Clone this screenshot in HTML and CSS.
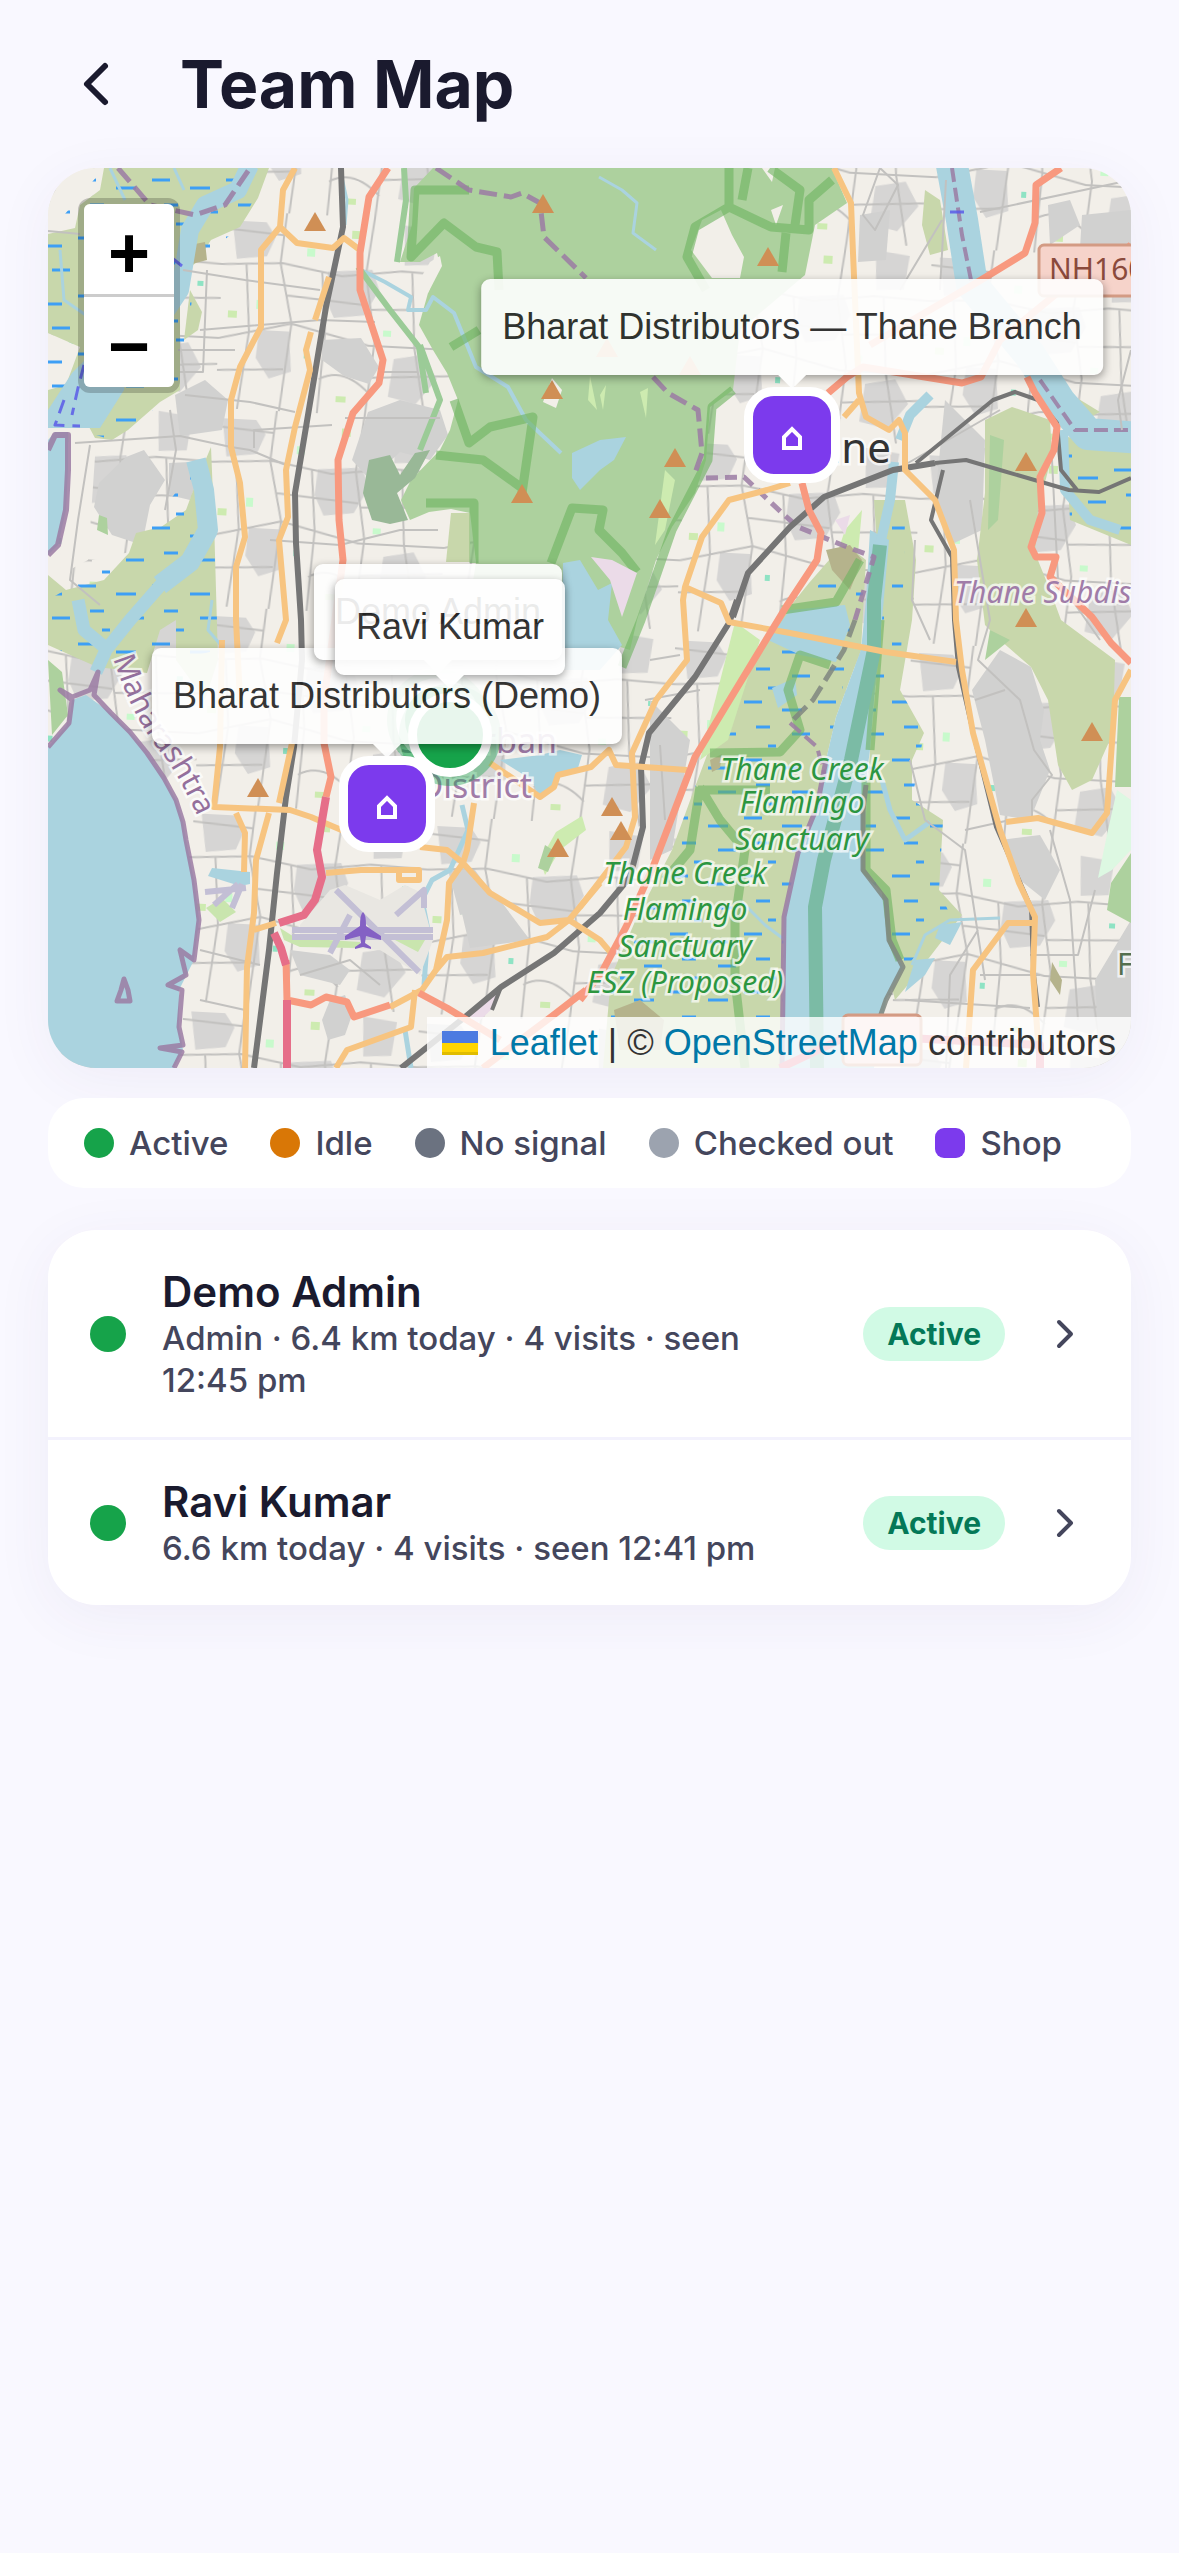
FILE: index.html
```html
<!DOCTYPE html>
<html lang="en">
  <head>
    <title>Team Map</title>
    <meta charset="UTF-8" />
    <meta name="viewport" content="width=device-width, initial-scale=1.0" />
    <link rel="stylesheet" href="styles.css">
  </head>
  <body>
    <header class="header">
      <button class="back" type="button" aria-label="Back">
        <svg class="back-icon" viewBox="0 0 24 24"><path d="M15 18L9 12L15 6" /></svg>
      </button>
      <h1>Team Map</h1>
    </header>

    <main>
      <section class="map" aria-label="Map">
        <svg class="tiles" viewBox="48 168 1083 900" preserveAspectRatio="xMidYMid slice">
          <defs>
            <pattern id="streets" width="236" height="198" patternUnits="userSpaceOnUse" patternTransform="rotate(3)">
              <path fill="#d6d5d4" d="M8 10h34l10 14-8 20-30 4zM106 56l44-4 8 20-14 26-30 4-10-20zM40 118h30l4 40-22 8-14-20zM180 6l34 4-4 34-28 2zM176 140l30-6 14 24-20 26-28-6z" />
              <path class="street" d="M0 54L60 50L120 60L180 52L236 54M62 0L58 50L72 110L64 198M0 128L72 110L150 128L236 128M150 0L144 56L156 124L150 198M24 52L30 120L22 198M100 56L106 118M190 52L196 128M0 18L60 22M66 82L148 88M150 92L236 88M106 118L102 198M152 160L236 154M0 160L66 156M102 164Q126 150 153 176M196 128L210 198" />
              <path fill="#c8facc" d="M84 34h8v8h-8zM164 112h8v6h-8zM36 88h7v9h-7z" />
              <path fill="#cdebb0" d="M128 14h9v8h-9zM8 100h9v7h-9zM120 180h10v6h-10z" />
              <path fill="#8fe3c4" d="M212 72h6v5h-6zM86 138h5v6h-5z" />
            </pattern>
            <pattern id="marsh" width="74" height="58" patternUnits="userSpaceOnUse">
              <path stroke="#3d9ff5" stroke-width="3" d="M4 6h18M42 14h20M16 31h14M52 38h18M28 50h8" />
            </pattern>
            <path id="peak" d="M0 -10L11 9H-11z" />
            <path id="coast-label" d="M113 658Q134 722 164 756Q186 786 212 850" />
          </defs>

          <rect x="48" y="168" width="1083" height="900" fill="#f2efe9" />
          <rect x="48" y="168" width="1083" height="900" fill="url(#streets)" />

          <!-- industrial blocks -->
          <g fill="#d1d1d0">
            <path d="M322 340L361 338L379 367L369 384L344 376L322 360z" />
            <path d="M126 457L144 450L165 480L150 505L142 545L112 535L94 507L99 483z" />
            <path d="M169 463L190 462L197 480L190 500L169 495z" />
            <path d="M368 412L400 400L440 410L448 435L430 460L400 452L370 480L352 460z" />
            <path d="M175 395L205 380L228 400L222 430L180 436z" />
            <path d="M1048 205L1070 200L1080 225L1050 245zM1082 215L1131 210V248H1080z" />
            <path d="M1000 650L1031 667L1044 710L1040 740L1050 770L1030 820L1000 815L985 740L972 690z" />
            <path d="M460 905L500 900L530 940L470 948zM448 870L475 870L500 905L460 915z" />
            <path d="M1095 980L1131 920V1068H1100z" />
            <path d="M945 400L985 440L982 530L950 545L935 500z" />
            <path d="M860 215L890 210L886 260L858 262z" />
            <path d="M330 1000L345 995L352 1015L345 1035L328 1040L322 1020z" />
            <path d="M650 700L690 740L672 850L650 860zM290 950L330 955L350 970L340 985L300 975z" />
            <path d="M1000 840L1040 835L1060 870L1045 900L1020 880z" />
          </g>

          <!-- bare land along the lower left shore -->
          <path fill="#f2efe9" d="M48 168H104L100 190L80 205L75 228L48 234zM48 333L80 347L66 385L48 390zM65 445L96 442L88 560L60 575zM92 560L130 552L105 580L90 575z" />

          <!-- marshes -->
          <g fill="#c8d7ab">
            <path d="M104 168H269L258 198L240 227L211 240L197 262L180 275V390L160 402L128 430L112 440L95 438L88 425L60 428L48 420V390L66 385L80 347L48 333V234L75 228L80 205L100 190z" />
            <path d="M190 290L202 312L198 330L184 340z" />
            <path d="M211 447L214 520L218 660L205 700L176 660V620L160 630L147 673L97 667L48 645V575L66 590L104 580L129 553L136 533L161 527L186 510L197 480z" />
            <path d="M844 543L809 583L763 640L710 747L695 787L672 850L637 917L611 977L603 1068H782L784 917L798 853L817 807L826 760L836 717L861 650L866 560z" />
            <path d="M874 500L905 500L916 560L912 620L900 690L924 733L912 760V800L943 820L939 890L962 915L912 980L895 1000L863 870L870 750L882 620z" />
            <path d="M1064 390L1100 412L1075 425zM1065 437L1131 440V545L1070 520z" />
            <path d="M925 190L940 200L948 250L930 255L922 225z" />
          </g>
          <g fill="#c8d7ab">
            <path d="M985 420L1012 407L1050 420L1052 455L1038 510L1035 553L1050 590L1061 620L1115 660L1113 733L1092 780L1072 790L1058 765L1048 700L1031 667L1000 640L985 625L977 560L985 493z" />
            <path d="M451 513H470V562H446z" />
          </g>
          <g fill="url(#marsh)">
            <path d="M48 234L104 168H269L240 227L197 262L180 390L112 440L48 420z" />
            <path d="M211 447L218 650L176 660L97 667L48 645V600L129 553z" />
            <path d="M844 560L763 640L695 787L672 850L611 990V1017H782L784 917L836 717L866 580z" />
            <path d="M874 520L905 520L900 690L924 733L912 800L943 820L939 890L950 915L895 980L863 870L870 750z" />
            <path d="M1064 400L1120 440H1131V545L1070 520z" />
          </g>

          <!-- national park -->
          <path fill="#add19e" d="M433 168L414 188L412 225L400 262L420 262L437 253L440 265L428 293L419 325L433 350L447 373L458 400L450 430L440 450L411 480L401 500L410 520L429 512L451 509L470 513L476 562L470 600L630 650L637 620L656 560L672 527L695 493L706 460L710 407L733 390L740 330L805 275L815 225L847 203L832 168z" />
          <path fill="#99b897" d="M369 460L390 455L400 475L415 453L430 450L415 478L397 493L408 520L390 524L372 520L363 493z" />
          <g fill="#f2efe9">
            <path d="M430 262L440 256L442 266L428 293L415 288z" />
            <path d="M721 210L732 235L744 257L740 278H712L691 250L702 220z" />
            <path d="M762 168L775 168L772 182zM771 210L783 205L776 225z" />
            <path d="M552 378L562 390L556 408L543 402z" />
          </g>
          <g fill="#cdebb0">
            <path d="M590 376L597 410L588 400zM665 470L675 480L665 530L655 545zM640 392L648 388L646 418zM600 395L606 385L603 410z" />
            <path d="M582 816L586 830L560 850L545 875L540 860L556 832z" />
            <path d="M735 622L760 640L728 740L700 760z" />
            <path d="M845 530L862 510L856 575L835 560z" />
          </g>
          <g fill="#add19e">
            <path d="M1119 697H1131V787H1115zM1131 853L1111 883L1107 910L1131 923zM990 435L1004 440L998 520L988 530zM985 660L990 630L1010 640z" />
            <path d="M545 845L556 852L548 872L538 868zM99 515L107 518L108 535L97 530zM48 660L62 672L68 715L52 735z" />
          </g>
          <path fill="#ddf8e2" d="M1117 790L1131 800V850L1112 870L1098 878L1108 830z" />
          <path fill="#b5b38c" d="M614 1010L640 1000L664 1020L660 1050H620zM190 245L205 242L207 260L192 264zM826 550L850 545L862 560L850 590L832 570zM1052 962L1062 980L1060 995L1050 980zM710 760L722 754L720 768L712 772z" />

          <!-- water -->
          <g fill="#aad3df">
            <path d="M48 747L69 723L72 700L86 695L111 713L130 732L147 753L164 778L176 800L183 822L186 840L194 880L199 920L194 960L179 990V1027L183 1050L174 1068H48z" />
            <path d="M48 440L55 432H68V470L66 510L58 545L48 555z" />
            <path d="M72 373L95 350L130 355L124 390L100 428H48V410z" />
            <path d="M572 453L600 440L626 437L614 460L600 470L580 490L572 478z" />
            <path d="M563 563L580 560L598 590L612 583L608 620L622 645L600 670H560z" />
            <path d="M870 530L889 540L882 620L878 650L870 750L866 780L863 813V870L886 900L889 940L903 967L886 1000L874 1068H782L784 917L798 853L817 807L826 760L836 717L861 650L866 600z" />
            <path d="M790 610L845 605L850 625L836 662L800 655L768 640z" />
            <path d="M772 688L795 678L797 695L778 708z" />
            <path d="M940 925L962 922L950 945L935 938zM915 960L935 958L925 975L905 992z" />
            <path d="M500 760L540 755L560 750L582 755L578 768L558 775L552 787L540 800L532 780z" />
            <path d="M208 876L240 886L250 884V872L212 868z" />
          </g>
          <g class="river">
            <path stroke-width="18" d="M250 165L238 190L205 205L190 230L180 290L150 335L110 355L82 385" />
            <path stroke-width="20" d="M196 460L204 490L208 530L190 562L160 585" />
            <path stroke-width="13" d="M165 580L130 620L106 650L96 672M108 650L84 630L78 600" />
            <path stroke-width="32" d="M951 160L962 220L972 285L1030 355L1060 402L1088 434L1140 438" />
            <path stroke-width="10" d="M894 462L890 500L880 545M930 395L910 415L900 440M1063 430L1065 490L1090 520L1120 530" />
            <path stroke-width="4" d="M361 270L385 282L411 297L408 310L426 310L433 297L454 313L476 367L508 387L526 420L561 453" />
            <path stroke-width="3" d="M599 177L622 190L637 203L633 233L656 250M110 168L125 200M174 168L184 190M340 168L347 200L345 225M60 250L64 300L90 318M212 600L208 630L225 650" />
            <path stroke-width="5" d="M462 805L468 830L450 870L432 880L422 900L428 930L424 985M411 1068L405 1030M882 780L890 810L905 840L930 822" />
            <path stroke-width="3" d="M912 965L925 935L950 920L1000 918M740 900L765 925L785 940" />
          </g>

          <!-- park and reserve outlines -->
          <g class="reserve">
            <path d="M469 190H415L411 257L444 223L476 247L497 252L499 290M479 330L451 347" />
            <path d="M454 400L469 443L490 427L533 417L522 493M436 455L483 460L522 488M426 503H474V563M551 563L572 508L603 510L599 530L622 553L637 572" />
            <path d="M729 168V207L695 227L687 257L706 290M729 207L771 227L809 230V200L832 180M786 233L782 272M770 168L800 190L795 225M748 168L742 200" />
            <path d="M733 390L712 407L708 460L672 530L641 620L622 667M782 610L836 602L860 560" />
            <path d="M710 753L780 752L800 730L788 690L800 655L830 665M698 790H770M700 787L720 820L745 850L735 920V980L745 1068M700 787L690 850L665 880" />
            <path d="M866 780V870L886 890L892 940L900 960M880 620L870 750" />
          </g>
          <path class="green-line" d="M404 168L406 200L397 262M358 267L390 310L419 347L426 393M420 345L440 400L420 450" />
          <path fill="none" stroke="#7bbba5" stroke-width="14" d="M880 545L874 600V650L851 760L824 860L815 907L817 1068" />
          <path fill="#ebdbe8" d="M591 557L612 560L637 573L622 617L610 580zM835 520L850 515L845 535zM470 1015L500 985L496 1005L475 1025z" />

          <!-- airport -->
          <path fill="#e9e7e2" d="M300 925L330 890L345 885L380 900L405 885L420 892L433 940L420 975L380 950L300 945z" />
          <path fill="#c9e5ae" d="M280 928L296 938L360 942V948L300 947L284 940zM395 940H425L418 952zM206 908L222 898L236 912L220 922z" />
          <path fill="none" stroke="#c3bfd5" stroke-width="6" d="M292 930H433M292 937H433M336 890L419 972M330 953L350 915M396 915L424 890V908M205 892L246 888M214 905L238 884M232 908L242 884" />

          <!-- shoreline and district borders -->
          <g class="border">
            <path stroke-width="5" d="M48 747L69 723L72 700L60 690L72 697L90 690L98 672L94 695L111 713L130 732L147 753L164 778L176 800L183 822L186 840L194 880L199 920L194 960L180 950L186 975L168 985L182 990L179 1027L183 1045L160 1048L182 1052L174 1068" />
            <path stroke-width="6" d="M48 450L55 435H68V470L66 510L58 545L48 555" />
            <path stroke-width="5" fill="#aad3df" d="M124 979L128 990L130 1001H117L121 990z" />
            <path stroke-width="5" d="M826 760L817 807L798 853L784 917L782 1068" />
            <path stroke-width="5" stroke="#7f867f" d="M866 785L863 810V870L886 900L889 940L903 967L886 1000L880 1017" />
            <path stroke-width="5" stroke-dasharray="18 7" d="M118 168L150 205L195 215L225 205L250 168" />
            <path stroke-width="5" stroke-dasharray="18 7" d="M436 168L469 190L511 197L522 193L540 203L544 237L586 278M653 377L668 393L698 410L702 453L695 473" />
            <path stroke-width="5" stroke-dasharray="12 7" d="M706 478L744 477L782 513L798 527L847 547L874 557L855 620" />
            <path stroke-width="5" stroke-dasharray="18 7" stroke="#7f867f" d="M855 620L844 650L813 700L790 723" />
            <path stroke-width="4" stroke-dasharray="14 6" d="M790 723L817 747L826 780M952 168L962 235L972 285M1040 380L1075 430L1131 430" />
            <path stroke-width="3" stroke="#5b5be8" stroke-dasharray="14 8" d="M84 365L78 388L72 415M64 400L55 425L80 426M172 258L182 266M950 212H968" />
          </g>

          <!-- minor roads -->
          <g class="street">
            <path d="M183 270L245 280L320 290M207 270L203 372L180 372M200 330L320 320L375 322M48 231L80 234M75 443L180 436L231 447L250 450L286 465M254 448L254 430L332 425M178 350H235M185 395L250 402L295 412M170 410L176 450L165 510" />
            <path d="M380 372H418M345 418H440M270 540L340 545L400 530H438M90 445L78 520L70 580L100 605" />
            <path d="M863 215L880 168L898 185L875 230zM900 290L942 220M980 212L1131 180M946 180L940 290M1131 350L1118 400L1122 430" />
            <path d="M908 463L1000 410M970 500L990 620L978 660L1020 700L1034 750L1052 775L1032 800V820M915 540L912 600L930 640M910 760L925 820L965 850L985 980M978 930L950 975L946 1068M965 830L1010 820" />
            <path d="M1050 830L1070 900L1078 1020M905 1000L1030 1008M980 975H1040M1030 955H1078L1095 890M1052 460L1058 580L1100 640M975 700L1005 690" />
            <path d="M650 660L680 655M645 700L700 690M660 745L665 820M200 950L260 965M200 1000L245 1010M300 975L350 960L380 985" />
          </g>

          <g class="rail">
            <path d="M341 168L343 227L326 307L306 427L295 493L296 543L301 620L302 660L294 747L286 797L277 873L269 950L254 1068" />
            <path d="M737 600L729 623L695 677L649 733L641 767L643 827L630 877L600 913L554 953L501 987L465 1017L401 1068M733 617L748 573L790 527L824 497L893 470L935 463" />
            <path class="thin" d="M935 463L966 460L1000 470L1069 490L1099 492L1131 478M916 463L993 400L1015 392L1038 400L1057 423L1061 470L1077 490M943 470L931 520L952 557L954 620L958 667L973 733L996 827L1031 907L1033 967L1038 1007M501 987L492 1010" />
          </g>

          <g class="secondary">
            <path d="M295 168L283 190L280 227L261 250V327L240 367L231 400V447L240 483L245 537L236 567V620L240 700M280 227L297 243L333 248L344 238L360 250" />
            <path d="M329 277L315 320M311 332L306 350L310 370L295 427L286 470L288 517L279 540L286 620L277 643M222 640L220 747L214 807L290 810L311 817L346 832M236 813L245 833L244 872M269 813L256 860L254 913L247 967L245 1068M254 930L276 923M292 743L279 803" />
            <path d="M326 873L361 870H419V880H399V870M420 847L447 850L463 863L490 893L540 923L569 920L600 940L611 953M474 803L467 850L463 863L449 883L447 920L436 970L422 990L390 1007M436 970L447 957L483 953L547 937L569 920L600 883M415 990L411 1027L347 1050L336 1068" />
            <path d="M490 763L540 797L554 787L558 775L591 767L609 750L616 765L687 770M790 483L767 490L729 500L702 537L685 587L683 600L687 660L656 700L632 753L635 817L626 847L580 907M685 587L721 603L729 622L790 633L886 652L956 662" />
            <path d="M834 168L851 203L853 253L859 393L866 417L889 430L899 420L905 433V470L935 500L954 550L956 620L962 670L973 733L1000 830L1019 883L1035 917L1033 973L1040 1068M859 400L844 417M1006 822L1038 818L1092 833L1107 813L1115 700L1131 670M1034 923H1008L973 970L966 1068" />
          </g>

          <g class="primary">
            <path d="M388 168L369 197L360 253V290L383 360L379 383L353 413L338 460L339 520L343 560L324 700V743L331 777L326 797M286 960L287 1000L311 1005L326 997L347 1002L354 1017L390 1005M419 993L447 1008L500 1040M586 990L551 1017L483 1068" />
            <path d="M802 483L809 510L821 533L817 560L786 607L695 757L653 867L626 927L603 970L580 1000M828 393L847 377L863 367L962 383L981 377L1000 340L1061 290" />
            <path d="M1061 168L1036 185L1035 223L1025 253L981 280L870 345M1131 245L1090 280M1027 377L1035 393L1057 427L1054 450L1040 477L1042 513L1031 547L1036 557H1056L1050 577L1092 617L1111 643L1131 663" />
            <path class="trunk" d="M326 797L317 850L322 877L315 900L304 915L279 923M274 933L281 948L286 965M287 1000V1068M780 1068L850 1035L1040 1045V1068" />
          </g>

          <g fill="#d08f55">
            <use href="#peak" x="315" y="222" />
            <use href="#peak" x="543" y="204" />
            <use href="#peak" x="552" y="390" />
            <use href="#peak" x="522" y="494" />
            <use href="#peak" x="607" y="348" />
            <use href="#peak" x="690" y="366" />
            <use href="#peak" x="768" y="257" />
            <use href="#peak" x="675" y="458" />
            <use href="#peak" x="660" y="509" />
            <use href="#peak" x="1026" y="462" />
            <use href="#peak" x="1026" y="618" />
            <use href="#peak" x="1092" y="732" />
            <use href="#peak" x="612" y="807" />
            <use href="#peak" x="621" y="831" />
            <use href="#peak" x="258" y="788" />
            <use href="#peak" x="558" y="848" />
          </g>
          <path fill="#8461c4" d="M363 912Q366 914 366 926L381 936V940L366 936L365 943L371 947V949L363 947L355 949V947L361 943L360 936L345 940V936L360 926Q360 914 363 912z" />

          <g class="shield">
            <rect x="1039" y="245" width="110" height="51" rx="5" />
            <text x="1049" y="280">NH160</text>
            <rect x="843" y="1015" width="78" height="50" rx="5" />
          </g>
          <text class="city" x="891" y="463" text-anchor="end">Thane</text>
          <g class="district">
            <text x="557" y="753" text-anchor="end">Suburban</text>
            <text x="532" y="798" text-anchor="end">District</text>
          </g>
          <text class="state"><textPath href="#coast-label">Maharashtra</textPath></text>
          <text class="subdistrict" x="954" y="603">Thane Subdis</text>
          <g class="sanctuary" text-anchor="middle">
            <text x="802" y="780">Thane Creek</text>
            <text x="802" y="813">Flamingo</text>
            <text x="802" y="850">Sanctuary</text>
            <text x="685" y="884">Thane Creek</text>
            <text x="685" y="920">Flamingo</text>
            <text x="685" y="957">Sanctuary</text>
            <text x="685" y="993">ESZ (Proposed)</text>
          </g>
          <text class="place" x="1117" y="975">F</text>
        </svg>

        <span class="person demo-pin"></span>
        <span class="person ravi-pin"></span>
        <span class="shop thane-pin">
          <svg viewBox="0 0 20 24"><path d="M2 22V11L10 3L18 11V22z" /></svg>
        </span>
        <span class="shop demo-shop-pin">
          <svg viewBox="0 0 20 24"><path d="M2 22V11L10 3L18 11V22z" /></svg>
        </span>

        <div class="tooltip thane-tip">Bharat Distributors — Thane Branch</div>
        <div class="tooltip demo-shop-tip">Bharat Distributors (Demo)</div>
        <div class="tooltip demo-tip">Demo Admin</div>
        <div class="tooltip ravi-tip">Ravi Kumar</div>

        <div class="zoom">
          <button type="button" aria-label="Zoom in">+</button>
          <button type="button" aria-label="Zoom out">−</button>
        </div>

        <div class="attribution">
          <a href="#"><svg class="flag" viewBox="0 0 12 8"><path fill="#4c7be1" d="M0 0h12v4H0z" /><path fill="#ffd500" d="M0 4h12v3H0z" /><path fill="#e0bc00" d="M0 7h12v1H0z" /></svg>Leaflet</a>
          | © <a href="#">OpenStreetMap</a> contributors
        </div>
      </section>

      <ul class="legend">
        <li><span class="dot active"></span>Active</li>
        <li><span class="dot idle"></span>Idle</li>
        <li><span class="dot no-signal"></span>No signal</li>
        <li><span class="dot checked-out"></span>Checked out</li>
        <li><span class="dot shop-dot"></span>Shop</li>
      </ul>

      <div class="team">
        <a class="member" href="#">
          <span class="status"></span>
          <span class="info">
            <strong>Demo Admin</strong>
            <small>Admin · 6.4 km today · 4 visits · seen 12:45 pm</small>
          </span>
          <span class="badge">Active</span>
          <svg class="chevron" viewBox="0 0 24 24"><path d="M9 18L15 12L9 6" /></svg>
        </a>
        <a class="member" href="#">
          <span class="status"></span>
          <span class="info">
            <strong>Ravi Kumar</strong>
            <small>6.6 km today · 4 visits · seen 12:41 pm</small>
          </span>
          <span class="badge">Active</span>
          <svg class="chevron" viewBox="0 0 24 24"><path d="M9 18L15 12L9 6" /></svg>
        </a>
      </div>
    </main>
  </body>
</html>
```
FILE: styles.css
```css
* {
  margin: 0;
  padding: 0;
  box-sizing: border-box;
}

body {
  min-height: 100vh;
  padding: 0 48px;
  background: #f9f8ff;
  color: #1a1a2e;
  font-family: Inter, sans-serif;
}

button {
  border: none;
  background: none;
  color: inherit;
  cursor: pointer;
}

.header {
  display: flex;
  align-items: center;
  gap: 36px;
  height: 168px;
}

.back {
  display: flex;
  align-items: center;
  justify-content: center;
  width: 96px;
  height: 96px;
}

.back-icon,
.chevron {
  fill: none;
  stroke: #1a1a2e;
  stroke-width: 2;
  stroke-linecap: round;
  stroke-linejoin: round;
}

.back-icon {
  width: 72px;
  height: 72px;
}

h1 {
  font-size: 66px;
  font-weight: 700;
  line-height: 84px;
}

/* Map */
.map {
  position: relative;
  height: 900px;
  border-radius: 48px;
  overflow: hidden;
  box-shadow: 0 12px 60px rgba(60, 50, 120, 0.06);
  font-family: "Liberation Sans", sans-serif;
  font-size: 36px;
}

.tiles {
  display: block;
  width: 100%;
  height: 100%;
}

.tiles path {
  stroke-linejoin: round;
}

.street,
.river,
.rail,
.reserve,
.green-line,
.border,
.primary,
.secondary {
  fill: none;
}

.street {
  stroke: #c2c1bf;
  stroke-width: 2;
}

.river {
  stroke: #aad3df;
}

.reserve {
  stroke: #6db35f;
  stroke-width: 9;
  stroke-opacity: 0.6;
}

.green-line {
  stroke: #9bcb97;
  stroke-width: 6;
}

.border {
  stroke: #9b7ba3;
  stroke-opacity: 0.85;
}

.rail {
  stroke: #757575;
  stroke-width: 6;
}

.rail .thin {
  stroke-width: 4;
}

.secondary {
  stroke: #f7c480;
  stroke-width: 6;
}

.primary {
  stroke: #f8997f;
  stroke-width: 7;
}

.primary .trunk {
  stroke: #e66e89;
  stroke-width: 8;
}

.shield rect {
  fill: #f6d3ca;
  stroke: #d39b84;
  stroke-width: 3;
}

.tiles text {
  font-family: "Noto Sans", sans-serif;
  paint-order: stroke;
  stroke: rgba(255, 255, 255, 0.7);
  stroke-width: 5;
}

.tiles .shield text {
  font-size: 30px;
  fill: #8a4a3c;
  stroke: none;
}

.city {
  font-size: 42px;
  fill: #333;
}

.district {
  font-size: 34px;
  fill: #a07ca8;
}

.state {
  font-size: 30px;
  fill: #94709c;
}

.subdistrict {
  font-size: 30px;
  font-style: italic;
  fill: #a07ca8;
}

.sanctuary {
  font-size: 30px;
  font-style: italic;
  fill: #2c9640;
}

.place {
  font-size: 30px;
  fill: #55704f;
}

.person,
.shop {
  position: absolute;
  transform: translate(-50%, -50%);
  border: 9px solid white;
}

.person {
  width: 84px;
  height: 84px;
  border-radius: 50%;
  background: #16a34a;
  box-shadow: 0 0 0 9px rgba(22, 163, 74, 0.4);
}

.shop {
  display: flex;
  align-items: center;
  justify-content: center;
  width: 96px;
  height: 96px;
  padding-top: 6px;
  border-radius: 30px;
  background: #7c3aed;
}

.shop svg {
  width: 20px;
  height: 24px;
  fill: none;
  stroke: white;
  stroke-width: 4;
}

.demo-pin {
  left: 390px;
  top: 552px;
}

.ravi-pin {
  left: 402px;
  top: 567px;
}

.thane-pin {
  left: 744px;
  top: 267px;
}

.demo-shop-pin {
  left: 339px;
  top: 636px;
}

.tooltip {
  position: absolute;
  transform: translateX(-50%);
  padding: 18px;
  border: 3px solid white;
  border-radius: 9px;
  background: white;
  color: #222;
  line-height: 54px;
  white-space: nowrap;
  opacity: 0.9;
  box-shadow: 0 3px 9px rgba(0, 0, 0, 0.4);
}

.tooltip::after {
  content: "";
  position: absolute;
  top: 100%;
  left: 50%;
  transform: translateX(-50%);
  border: 17px solid transparent;
  border-top-color: white;
  border-bottom: 0;
}

.thane-tip {
  left: 744px;
  top: 111px;
}

.demo-shop-tip {
  left: 339px;
  top: 480px;
}

.demo-tip {
  left: 390px;
  top: 396px;
}

.ravi-tip {
  left: 402px;
  top: 411px;
}

.zoom {
  position: absolute;
  top: 30px;
  left: 30px;
  border: 6px solid rgba(0, 0, 0, 0.2);
  border-radius: 12px;
}

.zoom button {
  display: block;
  width: 90px;
  height: 90px;
  padding-top: 9px;
  background: white;
  color: black;
  font: bold 72px/81px "Liberation Sans", sans-serif;
}

.zoom button:first-child {
  height: 93px;
  border-bottom: 3px solid #ccc;
  border-radius: 6px 6px 0 0;
}

.zoom button:last-child {
  border-radius: 0 0 6px 6px;
}

.attribution {
  position: absolute;
  right: 0;
  bottom: 0;
  padding: 0 15px;
  background: rgba(255, 255, 255, 0.8);
  color: #333;
  line-height: 51px;
  white-space: nowrap;
}

.attribution a {
  color: #0078a8;
  text-decoration: none;
}

.flag {
  width: 36px;
  height: 24px;
  margin-right: 12px;
}

/* Legend */
.legend {
  position: relative;
  display: flex;
  flex-wrap: wrap;
  gap: 18px 42px;
  margin: 30px 0 42px;
  padding: 24px 36px;
  border-radius: 36px;
  background: white;
  color: #44465c;
  font-size: 33px;
  font-weight: 500;
  line-height: 42px;
  list-style: none;
}

.legend li {
  display: flex;
  align-items: center;
  gap: 15px;
}

.dot {
  width: 30px;
  height: 30px;
  border-radius: 50%;
}

.active {
  background: #16a34a;
}

.idle {
  background: #d97706;
}

.no-signal {
  background: #6b7280;
}

.checked-out {
  background: #9ca3af;
}

.shop-dot {
  border-radius: 9px;
  background: #7c3aed;
}

/* Team list */
.team {
  border-radius: 48px;
  background: white;
  box-shadow: 0 12px 60px rgba(60, 50, 120, 0.06);
}

.member {
  display: flex;
  align-items: center;
  gap: 36px;
  padding: 36px 42px;
  color: inherit;
  text-decoration: none;
}

.member + .member {
  border-top: 3px solid #f3f2fd;
}

.status {
  width: 36px;
  height: 36px;
  flex-shrink: 0;
  border-radius: 50%;
  background: #16a34a;
}

.info {
  flex: 1;
  min-width: 0;
}

.info strong,
.info small {
  display: block;
}

.info strong {
  font-size: 42px;
  font-weight: 600;
  line-height: 51px;
}

.info small {
  color: #44465c;
  font-size: 33px;
  font-weight: 500;
  line-height: 42px;
}

.badge {
  padding: 0 24px;
  border-radius: 27px;
  background: #d1fae5;
  color: #047857;
  font-size: 30px;
  font-weight: 700;
  line-height: 54px;
}

.chevron {
  width: 48px;
  height: 48px;
  flex-shrink: 0;
  stroke: #44465c;
}
```
